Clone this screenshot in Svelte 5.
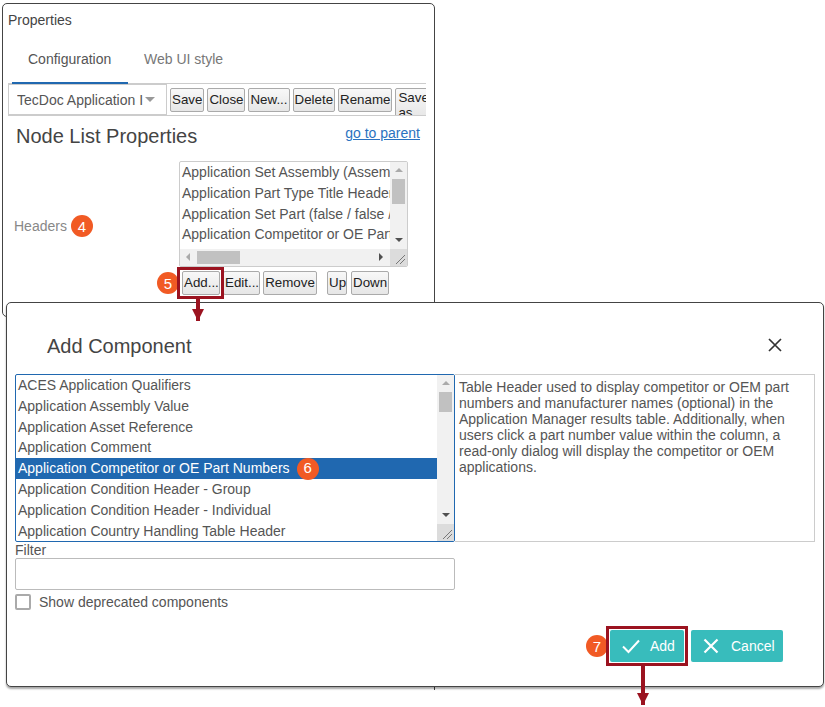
<script>
  const tools = ['Save', 'Close', 'New...', 'Delete', 'Rename'];
  const headers = ['Application Set Assembly (Assembly / Assembly)', 'Application Part Type Title Header', 'Application Set Part (false / false / false)', 'Application Competitor or OE Part Numbers'];
  const components = ['ACES Application Qualifiers', 'Application Assembly Value', 'Application Asset Reference', 'Application Comment', 'Application Competitor or OE Part Numbers', 'Application Condition Header - Group', 'Application Condition Header - Individual', 'Application Country Handling Table Header'];
</script>

<div class="stage">
  <section class="panel">
    <div class="panel-title">Properties</div>
    <div class="tabs">
      <div class="tab active">Configuration</div>
      <div class="tab">Web UI style</div>
    </div>
    <div class="toolbar">
      <div class="combo"><span class="combo-text">TecDoc Application I</span><i class="caret"></i></div>
      {#each tools as t}
        <button class="btn tool">{t}</button>
      {/each}
      <button class="btn saveas">Save as</button>
    </div>
    <div class="head">
      <h2>Node List Properties</h2>
      <a href="#top">go to parent</a>
    </div>
    <div class="field">
      <div class="field-label">Headers <span class="badge">4</span></div>
      <div class="field-body">
        <div class="lb small">
          <div class="lb-main">
            <div class="lb-rows small-rows">
              {#each headers as h}<div class="small-row">{h}</div>{/each}
            </div>
            <div class="vbar">
              <i class="up"></i><div class="vtrack"><b class="thumb-small"></b></div><i class="down"></i>
            </div>
          </div>
          <div class="hbar">
            <i class="left"></i><div class="htrack"><b></b></div><i class="right"></i>
            <div class="corner"><svg width="17" height="17" viewBox="0 0 17 17"><path d="M6 15L15 6M10 15L15 10" stroke="#777" fill="none"/></svg></div>
          </div>
        </div>
        <div class="list-actions">
          <button class="btn add">Add...</button>
          <button class="btn edit">Edit...</button>
          <button class="btn remove">Remove</button>
          <button class="btn up-btn">Up</button>
          <button class="btn down-btn">Down</button>
        </div>
      </div>
    </div>
  </section>
  <div class="tick"></div>

  <section class="dialog">
    <header class="dlg-head">
      <h3>Add Component</h3>
      <svg class="close" width="16" height="16" viewBox="0 0 16 16"><path d="M2 2L14 14M14 2L2 14" stroke="#333" stroke-width="1.7" fill="none"/></svg>
    </header>
    <div class="picker">
      <div class="lb big">
        <div class="lb-rows">
          {#each components as c, i}
            <div class="big-row" class:sel={i === 4}>{c}{#if i === 4}<span class="badge row-badge">6</span>{/if}</div>
          {/each}
        </div>
        <div class="vbar big-bar">
          <i class="up"></i><div class="vtrack"><b class="thumb-big"></b></div><i class="down"></i>
          <div class="corner"><svg width="17" height="17" viewBox="0 0 17 17"><path d="M6 15L15 6M10 15L15 10" stroke="#777" fill="none"/></svg></div>
        </div>
      </div>
      <div class="desc">Table Header used to display competitor or OEM part numbers and manufacturer names (optional) in the Application Manager results table. Additionally, when users click a part number value within the column, a read-only dialog will display the competitor or OEM applications.</div>
    </div>
    <label class="filter-label" for="flt">Filter</label>
    <input id="flt" class="filter" />
    <div class="check"><i class="box"></i><span>Show deprecated components</span></div>
    <footer class="dlg-foot">
      <span class="badge foot-badge">7</span>
      <button class="tbtn first">
        <svg width="20" height="16" viewBox="0 0 20 16"><path d="M2 8.5L7.5 14L18 2.5" stroke="#fff" stroke-width="2" fill="none"/></svg>
        <span>Add</span>
      </button>
      <button class="tbtn second">
        <svg width="16" height="16" viewBox="0 0 16 16"><path d="M1.5 1.5L14.5 14.5M14.5 1.5L1.5 14.5" stroke="#fff" stroke-width="2.2" fill="none"/></svg>
        <span>Cancel</span>
      </button>
    </footer>
  </section>

  <span class="badge b5">5</span>
  <div class="hl hl-add"></div>
  <div class="hl hl-ok"></div>
  <div class="arrow a1"></div>
  <div class="arrow a2"></div>
</div>

<style>
  :global(body) { margin: 0; background: #fff; }
  .stage {
    position: relative; width: 825px; height: 707px; overflow: hidden; background: #fff;
    font: 14px "Liberation Sans", Arial, sans-serif; color: #444;
  }
  button, input { font: inherit; margin: 0; }

  .panel {
    position: absolute; left: 2px; top: 3px; width: 433px; height: 314px; box-sizing: border-box;
    border: 1px solid #444; border-radius: 5px; background: #fff; padding: 0 8px 0 5px;
  }
  .tick { position: absolute; left: 434px; top: 687px; width: 1px; height: 3px; background: #444; }
  .panel-title { padding: 8px 0 0; height: 16px; line-height: 16px; color: #444; }
  .tabs { display: flex; height: 57px; margin-left: 4px; box-sizing: border-box; }
  .tab { padding: 16px 16px 0; height: 57px; box-sizing: border-box; color: #777; line-height: 31px; }
  .tab.active { color: #555; border-bottom: 3px solid #2068b0; width: 116px; }
  .toolbar {
    display: flex; align-items: flex-start; gap: 3px; height: 33px; width: 418px; box-sizing: border-box;
    border-top: 1px solid #ccc; border-bottom: 1px solid #ccc; overflow: hidden; margin-top: -2px;
  }
  .combo {
    width: 159px; height: 31px; box-sizing: border-box; border: 1px solid #ccc; display: flex; align-items: center;
    padding-left: 8px; flex: none; color: #555; background: #fff;
  }
  .combo-text { width: 127px; overflow: hidden; white-space: nowrap; }
  .caret { width: 0; height: 0; border: 5px solid transparent; border-top: 5px solid #999; border-bottom: 0; margin-left: 1px; }
  .btn {
    height: 24px; padding: 0 1px; box-sizing: border-box; border: 1px solid #aaa; border-radius: 2px;
    background: linear-gradient(#f8f8f8, #e6e6e6); color: #222; font-size: 13.33px; line-height: 20px; white-space: nowrap; flex: none;
  }
  .tool { margin-top: 4px; }
  .saveas { width: 36px; height: 31px; white-space: normal; padding: 1px 2px 0; line-height: 15px; text-align: left; overflow: hidden; margin-top: 4px; display: block; }
  .head { display: flex; justify-content: space-between; padding: 7px 6px 0 8px; height: 36px; box-sizing: border-box; }
  .head h2 { margin: 0; font-size: 20px; font-weight: 400; line-height: 26px; color: #444; }
  .head a { color: #2a72c0; line-height: 18px; margin-top: 1px; }
  .field { display: flex; height: 160px; margin-top: 9px; }
  .field-label { width: 171px; padding-left: 6px; box-sizing: border-box; color: #888; margin-top: 53px; display: flex; align-items: center; gap: 4px; height: 24px; }
  .badge {
    display: inline-flex; align-items: center; justify-content: center; width: 22px; height: 22px; border-radius: 50%;
    background: #f15a24; color: #fff; font-size: 15px; flex: none;
  }
  .lb { box-sizing: border-box; background: #fff; }
  .small { width: 229px; height: 106px; border: 1px solid #ccc; border-radius: 2px; display: flex; flex-direction: column; overflow: hidden; }
  .lb-main { display: flex; height: 87px; }
  .lb-rows { flex: 1; overflow: hidden; min-width: 0; }
  .small-rows { padding-top: 0.3px; }
  .small-row { height: 20.67px; line-height: 20.67px; padding-left: 2px; white-space: nowrap; overflow: hidden; color: #555; }
  .vbar { width: 17px; flex: none; background: #f1f1f1; display: flex; flex-direction: column; position: relative; }
  .vtrack { flex: 1; position: relative; }
  .thumb-small { display: block; width: 13px; height: 25px; margin: 0 2px; background: #c1c1c1; }
  .thumb-big { display: block; width: 13px; height: 20px; margin: 0 2px; background: #c1c1c1; }
  .up, .down { height: 17px; flex: none; position: relative; display: block; }
  .up::after, .down::after { content: ""; position: absolute; left: 5px; top: 6px; border: 4px solid transparent; }
  .up::after { border-bottom: 4px solid #aaa; border-top: 0; }
  .down::after { border-top: 4px solid #505050; border-bottom: 0; }
  .hbar { display: flex; height: 17px; background: #f1f1f1; flex: none; position: relative; }
  .left, .right { width: 17px; flex: none; position: relative; display: block; }
  .left::after, .right::after { content: ""; position: absolute; top: 4px; left: 6px; border: 4px solid transparent; }
  .left::after { border-right: 4px solid #aaa; border-left: 0; }
  .right::after { border-left: 4px solid #505050; border-right: 0; }
  .htrack { flex: 1; position: relative; }
  .htrack b { display: block; width: 43px; height: 13px; margin: 2px 0 0 0; background: #c1c1c1; }
  .corner { width: 17px; height: 17px; background: #dcdcdc; flex: none; }
  .list-actions { display: flex; gap: 3px; margin: 4px 0 0 3px; }
  .add { width: 38px; }
  .edit { width: 37px; }
  .remove { width: 54px; margin-right: 7px; }
  .up-btn { width: 20px; margin-right: 1px; }
  .down-btn { width: 38px; }

  .dialog {
    position: absolute; left: 6px; top: 302px; width: 818px; height: 385px; box-sizing: border-box;
    border: 1px solid #444; border-radius: 5px; background: #fff; box-shadow: 0 2px 2px rgba(0,0,0,.35); padding: 0 8px;
  }
  .dlg-head { height: 71px; display: flex; align-items: center; justify-content: space-between; padding: 13px 32px 0 32px; box-sizing: border-box; }
  .dlg-head h3 { margin: 2px 0 0; font-size: 20px; font-weight: 400; color: #444; }
  .picker { display: flex; height: 168px; width: 800px; }
  .big { width: 440px; height: 168px; border: 1px solid #2068b0; border-radius: 2px; display: flex; flex: none; }
  .big-row { height: 20.8px; line-height: 20.8px; padding-left: 2px; white-space: nowrap; color: #555; display: flex; align-items: center; }
  .big-row.sel { background: #2068b0; color: #fff; }
  .row-badge { margin-left: 7px; }
  .big-bar .corner { position: absolute; right: 0; bottom: 0; }
  .big-bar .down { margin-bottom: 17px; }
  .desc {
    flex: 1; border: 1px solid #ccc; border-left: 0; padding: 4px 20px 0 4px; font-size: 14px; line-height: 16px; color: #555;
  }
  .filter-label { display: block; height: 16px; line-height: 16px; color: #555; }
  .filter { display: block; width: 440px; height: 32px; box-sizing: border-box; border: 1px solid #bbb; border-radius: 2px; margin: 0; }
  .check { display: flex; align-items: center; gap: 8px; margin-top: 4px; height: 16px; color: #555; }
  .box { width: 16px; height: 16px; box-sizing: border-box; border: 2px solid #aaa; border-radius: 2px; display: block; }
  .dlg-foot { display: flex; align-items: center; margin: 20px 0 0 570px; height: 32px; position: relative; }
  .tbtn {
    height: 32px; border: 0; border-radius: 2px; background: #38bcbc; color: #fff; display: flex; align-items: center; padding: 0; flex: none;
  }
  .first { width: 74px; margin-left: 25px; padding-left: 11px; gap: 9px; }
  .second { width: 92px; margin-left: 7px; padding-left: 12px; gap: 12px; }
  .foot-badge { position: absolute; left: 1px; top: 5px; }

  .b5 { position: absolute; left: 157px; top: 272px; }
  .hl { position: absolute; box-sizing: border-box; border: 3px solid #9b1320; pointer-events: none; }
  .hl-add { left: 177px; top: 267px; width: 47px; height: 32px; }
  .hl-ok { left: 606px; top: 626px; width: 82px; height: 40px; }
  .arrow { position: absolute; width: 4px; background: #9b1320; }
  .arrow::after { content: ""; position: absolute; left: -4px; bottom: 0; border: 6px solid transparent; border-top: 12px solid #9b1320; border-bottom: 0; }
  .a1 { left: 196px; top: 298px; height: 23px; }
  .a2 { left: 641px; top: 666px; height: 39px; }
</style>
